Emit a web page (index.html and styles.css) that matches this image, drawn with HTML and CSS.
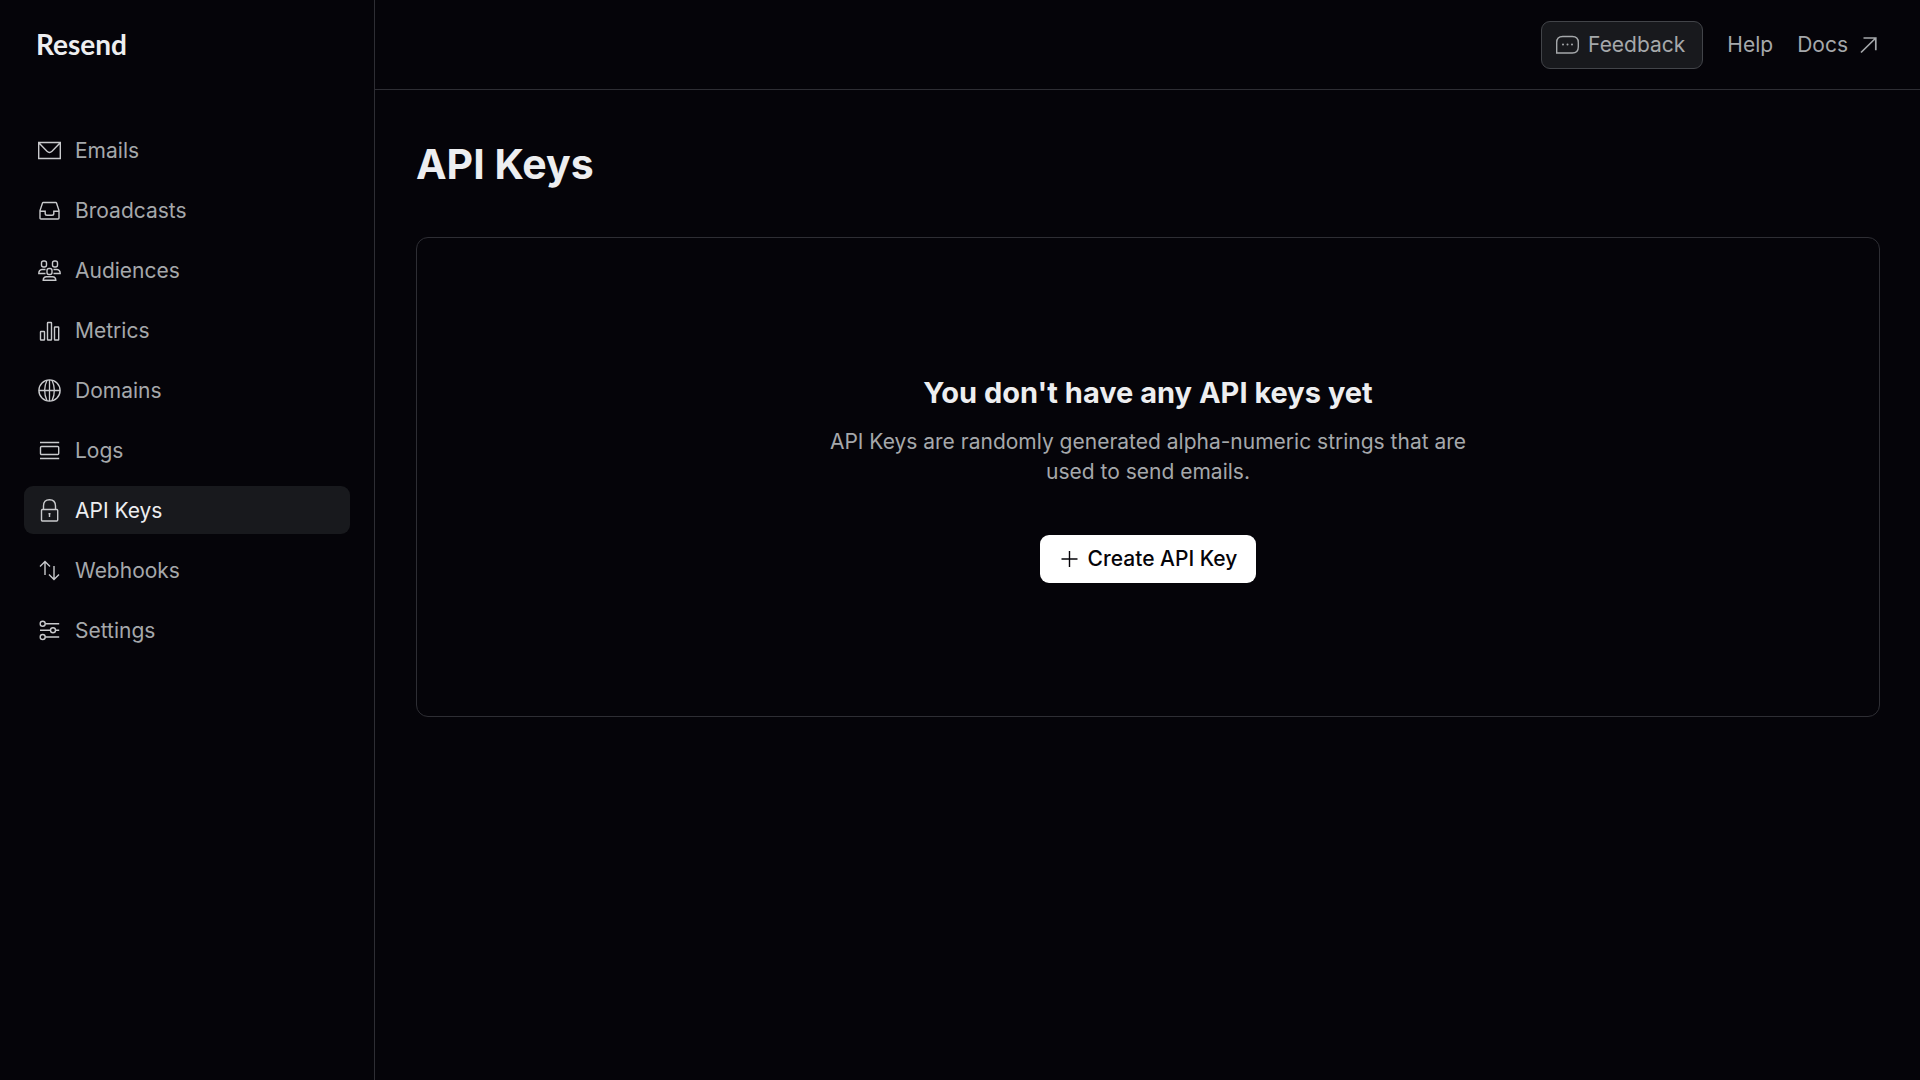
FILE: index.html
```html
<!DOCTYPE html>
<html lang="en">
<head>
<meta charset="utf-8">
<meta name="viewport" content="width=device-width, initial-scale=1">
<title>API Keys · Resend</title>
<link rel="stylesheet" href="styles.css">
</head>
<body>
<div class="app">
  <aside class="sidebar">
    <a class="logo" href="#">Resend</a>
    <nav class="nav" aria-label="Main">
      <a class="nav-item" href="#">
        <svg class="icon" viewBox="0 0 24 24" aria-hidden="true"><path d="M.7 4.500h21.600v16H.7zM1 5l8 8.300q2.500 2.200 5 0L22 5"/></svg>
        <span class="label">Emails</span></a>
      <a class="nav-item" href="#">
        <svg class="icon" viewBox="0 0 24 24" aria-hidden="true"><path d="M5.200 4.500h12.600q.5 0 .7.500l2.500 7.600v7.400q0 1-1 1H3q-1 0-1-1v-7.400l2.500-7.600q.200-.5.700-.5zM2 13.200h5.200v2.300q0 1.800 1.800 1.800h5q1.800 0 1.800-1.800v-2.300H21"/></svg>
        <span class="label">Broadcasts</span></a>
      <a class="nav-item" href="#">
        <svg class="icon" viewBox="0 0 24 24" aria-hidden="true"><rect x="3.500" y="3" width="5" height="6" rx="2"/><rect x="14.500" y="3" width="5" height="6" rx="2"/><rect x="9" y="10.500" width="5" height="6" rx="2"/><path d="M7.500 15.500H.8q0-3.500 3.200-4h3.500M15.500 15.500h6.700q0-3.500-3.200-4h-3.500M5.200 22.300q0-3.300 3.300-3.500h6q3.300.2 3.300 3.500z"/></svg>
        <span class="label">Audiences</span></a>
      <a class="nav-item" href="#">
        <svg class="icon" viewBox="0 0 24 24" aria-hidden="true"><rect x="2.500" y="13.500" width="4" height="8.500" rx=".5"/><rect x="9.500" y="4.500" width="4" height="17.500" rx=".5"/><rect x="16.500" y="9" width="4.200" height="13" rx=".5"/></svg>
        <span class="label">Metrics</span></a>
      <a class="nav-item" href="#">
        <svg class="icon" viewBox="0 0 24 24" aria-hidden="true"><circle cx="11.500" cy="12.500" r="10.600"/><path d="M.9 12.500h21.200M11.500 2v21M9 2.300q-4.800 10.200 0 20.400M14 2.300q4.800 10.200 0 20.400" class="meridians"/></svg>
        <span class="label">Domains</span></a>
      <a class="nav-item" href="#">
        <svg class="icon" viewBox="0 0 24 24" aria-hidden="true"><path d="M2 4.500h19.200M2 20.500h19.200"/><rect x="2.500" y="8.500" width="18.200" height="8" rx="1"/></svg>
        <span class="label">Logs</span></a>
      <a class="nav-item active" href="#" aria-current="page">
        <svg class="icon" viewBox="0 0 24 24" aria-hidden="true"><rect x="3.500" y="11.500" width="16.200" height="11.500" rx="1"/><path d="M5.500 11.500V8q0-6.300 6-6.300t6 6.300v3.500"/><path d="M11.500 15v4M10.500 15.700h2"/></svg>
        <span class="label">API Keys</span></a>
      <a class="nav-item" href="#">
        <svg class="icon" viewBox="0 0 24 24" aria-hidden="true"><path d="M7 17V3.500M2 8.500l5-5 5 5M16 8v13.500M11 16.500l5 5 5-5"/></svg>
        <span class="label">Webhooks</span></a>
      <a class="nav-item" href="#">
        <svg class="icon" viewBox="0 0 24 24" aria-hidden="true"><circle cx="4.700" cy="5.700" r="2.500"/><circle cx="15" cy="12.300" r="2.500"/><circle cx="4.700" cy="19" r="2.500"/><path d="M7.200 5.700h14M2 12.300h10.500M17.500 12.300h3.700M7.200 19h14"/></svg>
        <span class="label">Settings</span></a>
    </nav>
  </aside>
  <div class="content">
    <header class="topbar">
      <button class="button feedback" type="button">
        <svg class="icon" viewBox="0 0 24 24" aria-hidden="true"><path d="M.7 20V9.500Q.7 3.500 6.700 3.500h9.600q6 0 6 6V14q0 6-6 6z"/><path class="dots" d="M7 11.500h.01M11.500 11.500h.01M16 11.500h.01"/></svg>
        Feedback</button>
      <a class="top-link" href="#">Help</a>
      <a class="top-link" href="#">Docs
        <svg class="icon arrow" viewBox="0 0 24 24" aria-hidden="true"><path d="M5 19.500 19.800 5M7.500 5h12.300v12.300"/></svg>
      </a>
    </header>
    <main class="main">
      <h1 class="title">API Keys</h1>
      <section class="empty">
        <h2 class="empty-title">You don't have any API keys yet</h2>
        <p class="empty-text">API Keys are randomly generated alpha-numeric strings that are used to send emails.</p>
        <button class="button create" type="button">
          <svg class="icon" viewBox="0 0 24 24" aria-hidden="true"><path d="M11.500 4v16M3.500 12h16"/></svg>
          Create API Key</button>
      </section>
    </main>
  </div>
</div>
</body>
</html>
```
FILE: styles.css
```css
* {
  box-sizing: border-box;
}

body {
  margin: 0;
  background: #050409;
  color: #a5a8ab;
  font-family: Inter, "Liberation Sans", sans-serif;
  font-size: 21px;
  line-height: 30px;
}

a {
  color: inherit;
  text-decoration: none;
}

.app {
  display: grid;
  grid-template-columns: 375px 1fr;
  min-height: 100vh;
}

.sidebar {
  padding: 0 24px;
  border-right: 1px solid #2e2e34;
}

.logo {
  display: flex;
  align-items: center;
  height: 88px;
  padding-left: 12px;
  color: #edeef0;
  font-family: Lato, sans-serif;
  font-size: 28px;
  font-weight: 700;
}

.nav {
  display: flex;
  flex-direction: column;
  gap: 12px;
  padding-top: 38px;
}

.nav-item {
  display: flex;
  align-items: center;
  gap: 13px;
  height: 48px;
  padding: 0 14px;
  border-radius: 9px;
}

.nav-item .icon {
  color: #c9cacd;
}

.nav-item .label {
  padding-top: 2px;
}

.nav-item.active {
  background: #18191d;
  color: #edeef0;
}

.icon {
  flex: none;
  width: 24px;
  height: 24px;
  fill: none;
  stroke: currentColor;
  stroke-width: 1.400;
}

.arrow {
  stroke-width: 1.700;
}

.meridians {
  stroke-width: 1.300;
}

.dots {
  stroke-width: 2;
  stroke-linecap: round;
}

.topbar {
  display: flex;
  align-items: center;
  justify-content: flex-end;
  gap: 24px;
  height: 90px;
  padding: 0 40px;
  border-bottom: 1px solid #2e2e34;
}

.button {
  display: flex;
  align-items: center;
  gap: 8px;
  height: 48px;
  border: 0;
  border-radius: 9px;
  font: inherit;
}

.feedback {
  padding: 0 17px 0 14px;
  border: 1px solid #424449;
  background: #18191d;
  color: #a5a8ab;
}

.top-link {
  display: flex;
  align-items: center;
  gap: 8px;
}

.main {
  padding: 49px 40px 40px 41px;
}

.title {
  margin: 0;
  color: #edeef0;
  font-size: 41px;
  font-weight: 700;
  line-height: 50px;
}

.empty {
  display: flex;
  flex-direction: column;
  align-items: center;
  justify-content: center;
  min-height: 480px;
  margin-top: 48px;
  padding-top: 4px;
  border: 1px solid #2e2e34;
  border-radius: 12px;
  text-align: center;
}

.empty-title {
  margin: 0 0 16px;
  color: #edeef0;
  font-size: 29px;
  font-weight: 700;
  line-height: 36px;
}

.empty-text {
  max-width: 660px;
  margin: 0 0 48px;
}

.create {
  padding: 0 19px 0 18px;
  gap: 6px;
  background: #fff;
  color: #050409;
  font-weight: 500;
}
```
